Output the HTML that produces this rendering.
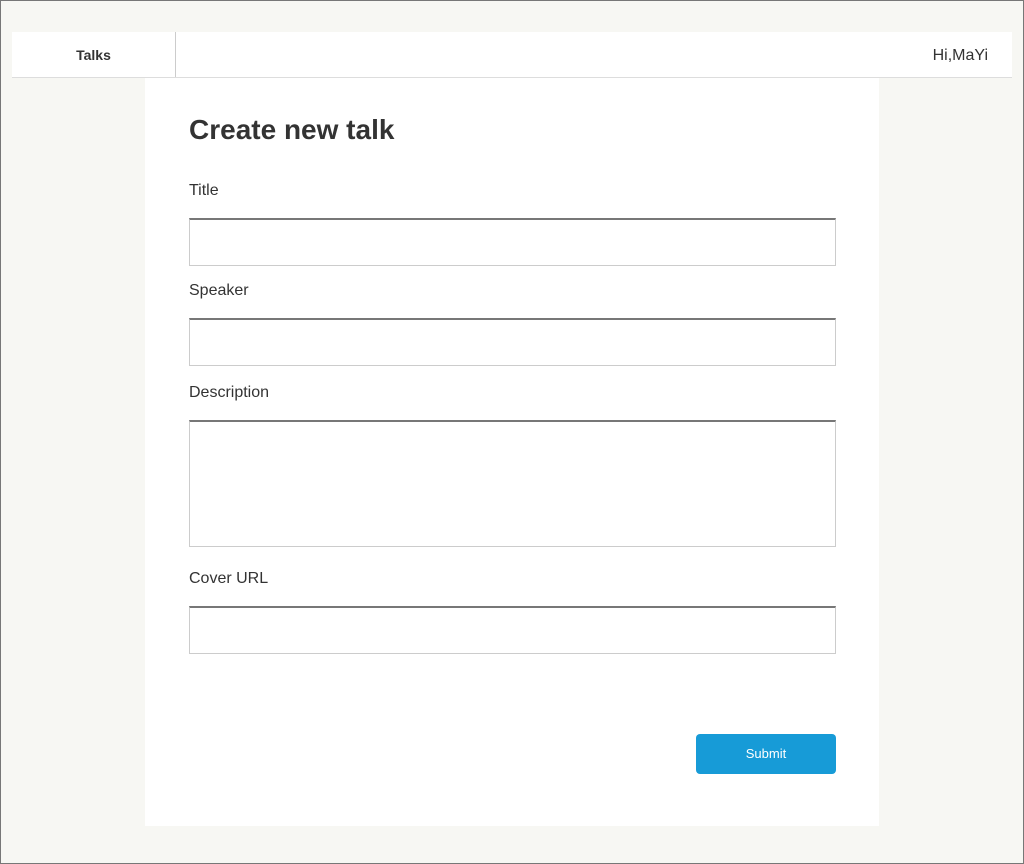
<!DOCTYPE html>
<html><head><style>
*{box-sizing:border-box;margin:0;padding:0}
body{width:1024px;height:864px;background:#f7f7f3;border:1px solid #777;position:relative;font-family:"Liberation Sans",sans-serif;color:#333;overflow:hidden}
.hdr{position:absolute;left:11px;top:31px;width:1000px;height:46px;background:#fff;border-bottom:1px solid #ddd;z-index:2}
.brand{position:absolute;left:0;top:0;width:164px;height:45px;border-right:1px solid #ccc;text-align:center;line-height:47px;font-weight:bold;font-size:14px}
.user{position:absolute;right:24px;top:0;line-height:47px;font-size:16px}
.main{position:absolute;left:144px;top:77px;width:734px;height:748px;background:#fff}
h1{position:absolute;left:44px;top:36px;font-size:28px;font-weight:bold}
label{position:absolute;left:44px;font-size:16px}
.in{position:absolute;left:44px;width:647px;border:1px solid #ccc;border-top:2px solid #777}
.btn{position:absolute;left:551px;top:656px;width:140px;height:40px;background:#179bd7;border-radius:4px;color:#fff;font-size:13px;text-align:center;line-height:40px}
</style></head><body>
<div class="hdr"><div class="brand">Talks</div><div class="user">Hi,MaYi</div></div>
<div class="main">
<h1>Create new talk</h1>
<label style="top:104px">Title</label>
<div class="in" style="top:140px;height:48px"></div>
<label style="top:204px">Speaker</label>
<div class="in" style="top:240px;height:48px"></div>
<label style="top:306px">Description</label>
<div class="in" style="top:342px;height:127px"></div>
<label style="top:492px">Cover URL</label>
<div class="in" style="top:528px;height:48px"></div>
<div class="btn">Submit</div>
</div>
</body></html>
